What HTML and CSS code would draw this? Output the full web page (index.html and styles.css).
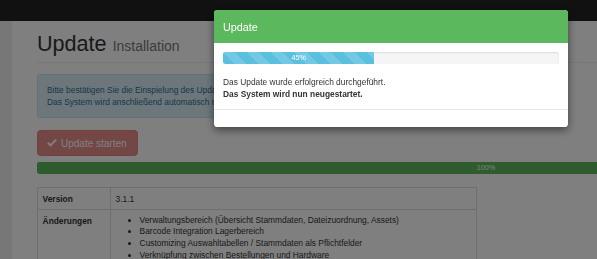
FILE: index.html
```html
<!DOCTYPE html>
<html lang="de">
<head>
  <meta charset="UTF-8" />
  <title>Update Installation</title>
  <link rel="stylesheet" href="styles.css">
</head>
<body>
  <header class="navbar"></header>

  <div class="layout">
    <aside class="sidebar"></aside>

    <main class="content">
      <div class="page-header">
        <h1>Update <small>Installation</small></h1>
      </div>

      <div class="alert">
        Bitte bestätigen Sie die Einspielung des Updates mit einem Klick auf den Button.<br>
        Das System wird anschließend automatisch neu gestartet.
      </div>

      <button class="btn-danger" disabled>
        <svg class="check" viewBox="0 0 12 10" width="10" height="9">
          <path d="M1 5.2 L4.3 8.4 L11 1.6" fill="none" stroke="#fff" stroke-width="2.4" />
        </svg>
        Update starten
      </button>

      <div class="progress progress-main">
        <div class="bar bar-success" style="width: 100%;">100%</div>
      </div>

      <table class="info-table">
        <tr>
          <th>Version</th>
          <td>3.1.1</td>
        </tr>
        <tr>
          <th>Änderungen</th>
          <td>
            <ul>
              <li>Verwaltungsbereich (Übersicht Stammdaten, Dateizuordnung, Assets)</li>
              <li>Barcode Integration Lagerbereich</li>
              <li>Customizing Auswahltabellen / Stammdaten als Pflichtfelder</li>
              <li>Verknüpfung zwischen Bestellungen und Hardware</li>
              <li>Diverse Fehlerbehebungen</li>
            </ul>
          </td>
        </tr>
      </table>
    </main>
  </div>

  <div class="backdrop"></div>

  <div class="modal">
    <div class="modal-header">Update</div>
    <div class="modal-body">
      <div class="progress progress-modal">
        <div class="bar bar-info bar-striped" style="width: 45%;">45%</div>
      </div>
      <p>Das Update wurde erfolgreich durchgeführt.</p>
      <p><strong>Das System wird nun neugestartet.</strong></p>
    </div>
    <div class="modal-footer"></div>
  </div>
</body>
</html>
```

FILE: styles.css
```css
* { box-sizing: border-box; }

html, body {
  margin: 0;
  padding: 0;
  height: 100%;
  overflow: hidden;
}

body {
  font-family: 'Liberation Sans', Arial, Helvetica, sans-serif;
  font-size: 8.4px;
  line-height: 12px;
  color: #333;
  background: #fff;
}

.navbar {
  height: 21px;
  background: #222;
}

.layout {
  display: flex;
  min-height: 100%;
}

.sidebar {
  width: 12px;
  flex: none;
  background: #eee;
}

.content {
  flex: none;
  width: 923px;
  padding-left: 25px;
}

.page-header {
  margin-top: 11px;
  padding-bottom: 7px;
  border-bottom: 1px solid #eee;
  margin-right: -400px;
}

.page-header h1 {
  margin: 0;
  height: 23px;
  font-size: 21.6px;
  line-height: 23px;
  font-weight: 500;
}

.page-header small {
  font-size: 14px;
  line-height: 14px;
  color: #777;
}

.alert {
  width: 440px;
  margin-top: 11px;
  padding: 9px;
  background: #d9edf7;
  border: 1px solid #bce8f1;
  border-radius: 2.4px;
  color: #31708f;
  white-space: nowrap;
  overflow: hidden;
}

.btn-danger {
  margin-top: 12px;
  height: 26px;
  padding: 0 10px 0 9px;
  display: flex;
  align-items: center;
  gap: 4px;
  font-family: inherit;
  font-size: 10px;
  color: #fff;
  background: #d9534f;
  border: 1px solid #d43f3a;
  border-radius: 3.6px;
  opacity: 0.65;
}

.check {
  margin-top: -1px;
}

.progress {
  background: #f5f5f5;
  border-radius: 2.4px;
  overflow: hidden;
  box-shadow: inset 0 1px 2px rgba(0,0,0,0.1);
}

.progress-main {
  width: 898px;
  height: 12px;
  margin-top: 6px;
  margin-bottom: 13px;
}

.bar {
  height: 100%;
  color: #fff;
  font-size: 7.2px;
  line-height: 12px;
  text-align: center;
}

.bar-success { background: #5cb85c; }
.bar-info { background: #5bc0de; }

.bar-striped {
  background-image: linear-gradient(45deg,
    rgba(255,255,255,0.15) 25%, transparent 25%,
    transparent 50%, rgba(255,255,255,0.15) 50%,
    rgba(255,255,255,0.15) 75%, transparent 75%, transparent);
  background-size: 24px 24px;
}

.info-table {
  width: 440px;
  border-collapse: collapse;
  border: 1px solid #ddd;
}

.info-table th,
.info-table td {
  padding: 4.6px;
  border: 1px solid #ddd;
  text-align: left;
  vertical-align: top;
  line-height: 12px;
}

.info-table th {
  width: 73px;
  font-weight: bold;
}

.info-table ul {
  margin: 0;
  padding-left: 24px;
}

.info-table li {
  line-height: 11.7px;
}

.backdrop {
  position: fixed;
  top: 0;
  left: 0;
  right: 0;
  bottom: 0;
  background: rgba(0,0,0,0.5);
  z-index: 10;
}

.modal {
  position: fixed;
  top: 10px;
  left: 214px;
  width: 354px;
  background: #fff;
  border-radius: 3.6px;
  overflow: hidden;
  box-shadow: 0 3px 9px rgba(0,0,0,0.5);
  z-index: 20;
}

.modal-header {
  height: 33px;
  padding: 0 9px;
  display: flex;
  align-items: center;
  background: #5cb85c;
  color: #fff;
  font-size: 10.8px;
}

.modal-body {
  padding: 9px;
}

.progress-modal {
  height: 12px;
  margin-bottom: 12px;
}

.modal-body p {
  margin: 0;
}

.modal-footer {
  height: 18px;
  border-top: 1px solid #e5e5e5;
}
```
